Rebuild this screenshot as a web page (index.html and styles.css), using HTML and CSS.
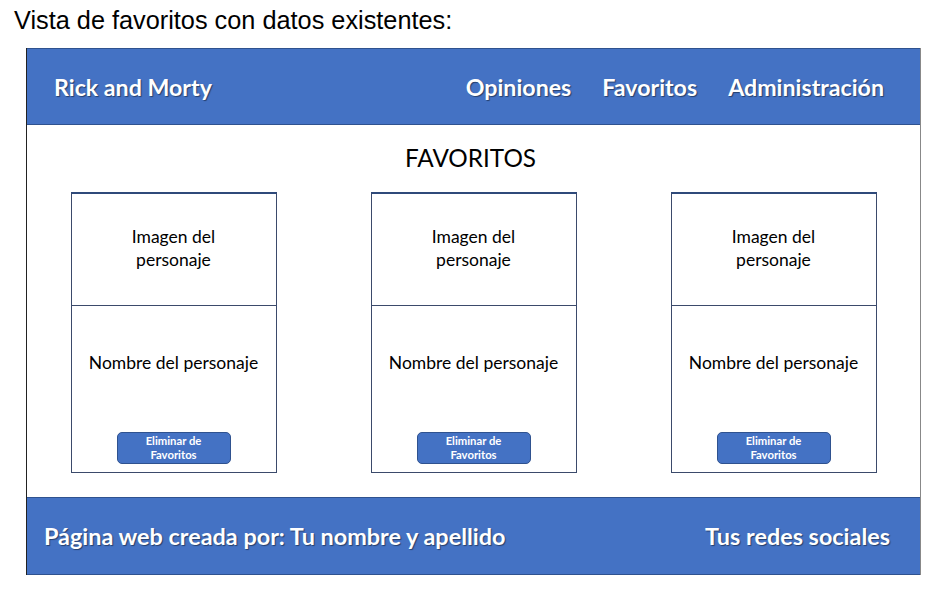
FILE: index.html
```html
<!DOCTYPE html>
<html lang="es">
<head>
<meta charset="utf-8">
<title>Vista de favoritos</title>
<link rel="stylesheet" href="styles.css">
</head>
<body>
<p class="caption">Vista de favoritos con datos existentes:</p>
<div class="frame">
  <header class="topbar">
    <div class="brand">Rick and Morty</div>
    <nav class="nav">
      <span>Opiniones</span>
      <span>Favoritos</span>
      <span>Administración</span>
    </nav>
  </header>
  <main class="content">
    <h1 class="title">FAVORITOS</h1>
    <div class="cards">
      <div class="card">
        <div class="card-img">Imagen del<br>personaje</div>
        <div class="card-body">
          <div class="card-name">Nombre del personaje</div>
          <button class="btn">Eliminar de<br>Favoritos</button>
        </div>
      </div>
      <div class="card">
        <div class="card-img">Imagen del<br>personaje</div>
        <div class="card-body">
          <div class="card-name">Nombre del personaje</div>
          <button class="btn">Eliminar de<br>Favoritos</button>
        </div>
      </div>
      <div class="card">
        <div class="card-img">Imagen del<br>personaje</div>
        <div class="card-body">
          <div class="card-name">Nombre del personaje</div>
          <button class="btn">Eliminar de<br>Favoritos</button>
        </div>
      </div>
    </div>
  </main>
  <footer class="footbar">
    <div>Página web creada por: Tu nombre y apellido</div>
    <div>Tus redes sociales</div>
  </footer>
</div>
</body>
</html>
```
FILE: styles.css
```css
html, body {
  margin: 0;
  padding: 0;
  background: #ffffff;
}
body {
  font-family: "Liberation Sans", Arial, sans-serif;
  color: #000;
}
.caption {
  margin: 0;
  padding: 5px 0 0 14px;
  font-size: 25.3px;
  line-height: 30px;
  height: 43px;
}
.frame {
  margin-left: 26px;
  width: 893px;
  border-left: 1px solid #222;
  border-right: 1px solid #888;
}
.topbar {
  height: 77px;
  background: #4472c4;
  border-top: 1px solid #2f528f;
  border-bottom: 1px solid #2f528f;
  box-sizing: border-box;
  display: flex;
  align-items: center;
  justify-content: space-between;
  padding: 0 36px 0 27px;
  color: #fff;
  font-family: Lato, "Open Sans", sans-serif;
  font-weight: bold;
  font-size: 23.2px;
  text-shadow: 1px 1px 1px rgba(0, 0, 0, 0.45);
}
.nav {
  display: flex;
  gap: 31px;
}
.content {
  height: 372px;
  box-sizing: border-box;
  padding-top: 17px;
  font-family: Lato, "Open Sans", sans-serif;
}
.title {
  margin: 0;
  padding-right: 6px;
  text-align: center;
  font-weight: normal;
  font-size: 24.3px;
  line-height: 32px;
  height: 50px;
}
.cards {
  display: flex;
  justify-content: center;
  gap: 94px;
}
.card {
  width: 206px;
  height: 281px;
  box-sizing: border-box;
  border: 1px solid #3b4a6b;
  border-top: 2px solid #2f4a7a;
  display: flex;
  flex-direction: column;
}
.card-img {
  height: 112px;
  box-sizing: border-box;
  border-bottom: 1px solid #3b4a6b;
  display: flex;
  align-items: center;
  justify-content: center;
  text-align: center;
  font-size: 17.5px;
  line-height: 23px;
  padding-bottom: 4px;
}
.card-body {
  flex: 1;
  display: flex;
  flex-direction: column;
  align-items: center;
}
.card-name {
  margin-top: 45px;
  font-size: 17.5px;
  line-height: 24px;
}
.btn {
  margin-top: 57px;
  width: 114px;
  height: 32px;
  background: #4472c4;
  border: 1px solid #2f528f;
  border-radius: 5px;
  color: #fff;
  font-family: Lato, "Open Sans", sans-serif;
  font-weight: bold;
  font-size: 11.3px;
  line-height: 14px;
  padding: 0;
}
.footbar {
  height: 78px;
  background: #4472c4;
  border-top: 1px solid #2f528f;
  border-bottom: 1px solid #2f528f;
  box-sizing: border-box;
  display: flex;
  align-items: center;
  justify-content: space-between;
  padding: 0 30px 0 17px;
  color: #fff;
  font-family: Lato, "Open Sans", sans-serif;
  font-weight: bold;
  font-size: 23.4px;
  text-shadow: 1px 1px 1px rgba(0, 0, 0, 0.45);
}
```
